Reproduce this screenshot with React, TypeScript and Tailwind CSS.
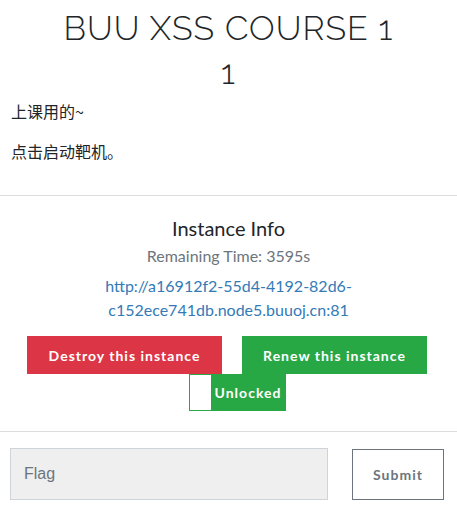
export default function App() {
  return (
    <div className="w-[457px] min-h-[520px] bg-white text-[#212529]" style={{ fontFamily: 'Lato, "Noto Sans CJK SC", sans-serif' }}>
      <div className="px-[11px] pt-[6px]">
        <h1
          className="text-center text-[34px] leading-[44px] font-light tracking-[1px]"
          style={{ fontFamily: 'Raleway, Lato, "Open Sans", sans-serif' }}
        >
          BUU XSS COURSE 1
          <br />1
        </h1>
        <div className="mt-[6px] text-[16px] leading-[22px]" style={{ fontFamily: '"Noto Sans CJK SC", sans-serif' }}>
          <p>上课用的~</p>
          <p className="mt-[18px]">点击启动靶机。</p>
        </div>
      </div>
      <div className="mt-[33px] border-t border-[#dddddd]" />
      <div className="flex flex-col pt-[20px]">
        <div className="text-center text-[20px] leading-[24px]">Instance Info</div>
        <div className="mt-[4px] text-center text-[16px] leading-[24px] text-[#6c757d]">Remaining Time: 3595s</div>
        <a className="mt-[6px] text-center text-[16px] leading-[24px] text-[#337ab7]" href="#">
          http://a16912f2-55d4-4192-82d6-
          <br />
          c152ece741db.node5.buuoj.cn:81
        </a>
        <div className="mt-[14px] flex pl-[27px] gap-[20px]">
          <button className="w-[195px] h-[38px] bg-[#dc3545] text-white font-bold text-[14px] tracking-[1px]">
            Destroy this instance
          </button>
          <button className="w-[185px] h-[38px] bg-[#28a745] text-white font-bold text-[14px] tracking-[1px]">
            Renew this instance
          </button>
        </div>
        <div className="ml-[189px] flex self-start h-[37px] border border-[#28a745]">
          <div className="w-[21px] bg-white" />
          <div className="w-[74px] bg-[#28a745] text-white font-bold text-[14px] tracking-[1px] flex items-center justify-center">
            Unlocked
          </div>
        </div>
      </div>
      <div className="mt-[20px] border-t border-[#dddddd]" />
      <div className="flex items-center px-[10px] pt-[16px]">
        <div className="w-[318px] h-[52px] bg-[#efefef] border border-[#ced4da] flex items-center pl-[13px] text-[16px] text-[#6c757d]" style={{ fontFamily: '"Liberation Sans", Arial, sans-serif' }}>
          Flag
        </div>
        <button className="ml-[24px] w-[92px] h-[51px] border border-[#6c757d] text-[#6c757d] font-bold text-[14px] tracking-[1px]">
          Submit
        </button>
      </div>
    </div>
  );
}
